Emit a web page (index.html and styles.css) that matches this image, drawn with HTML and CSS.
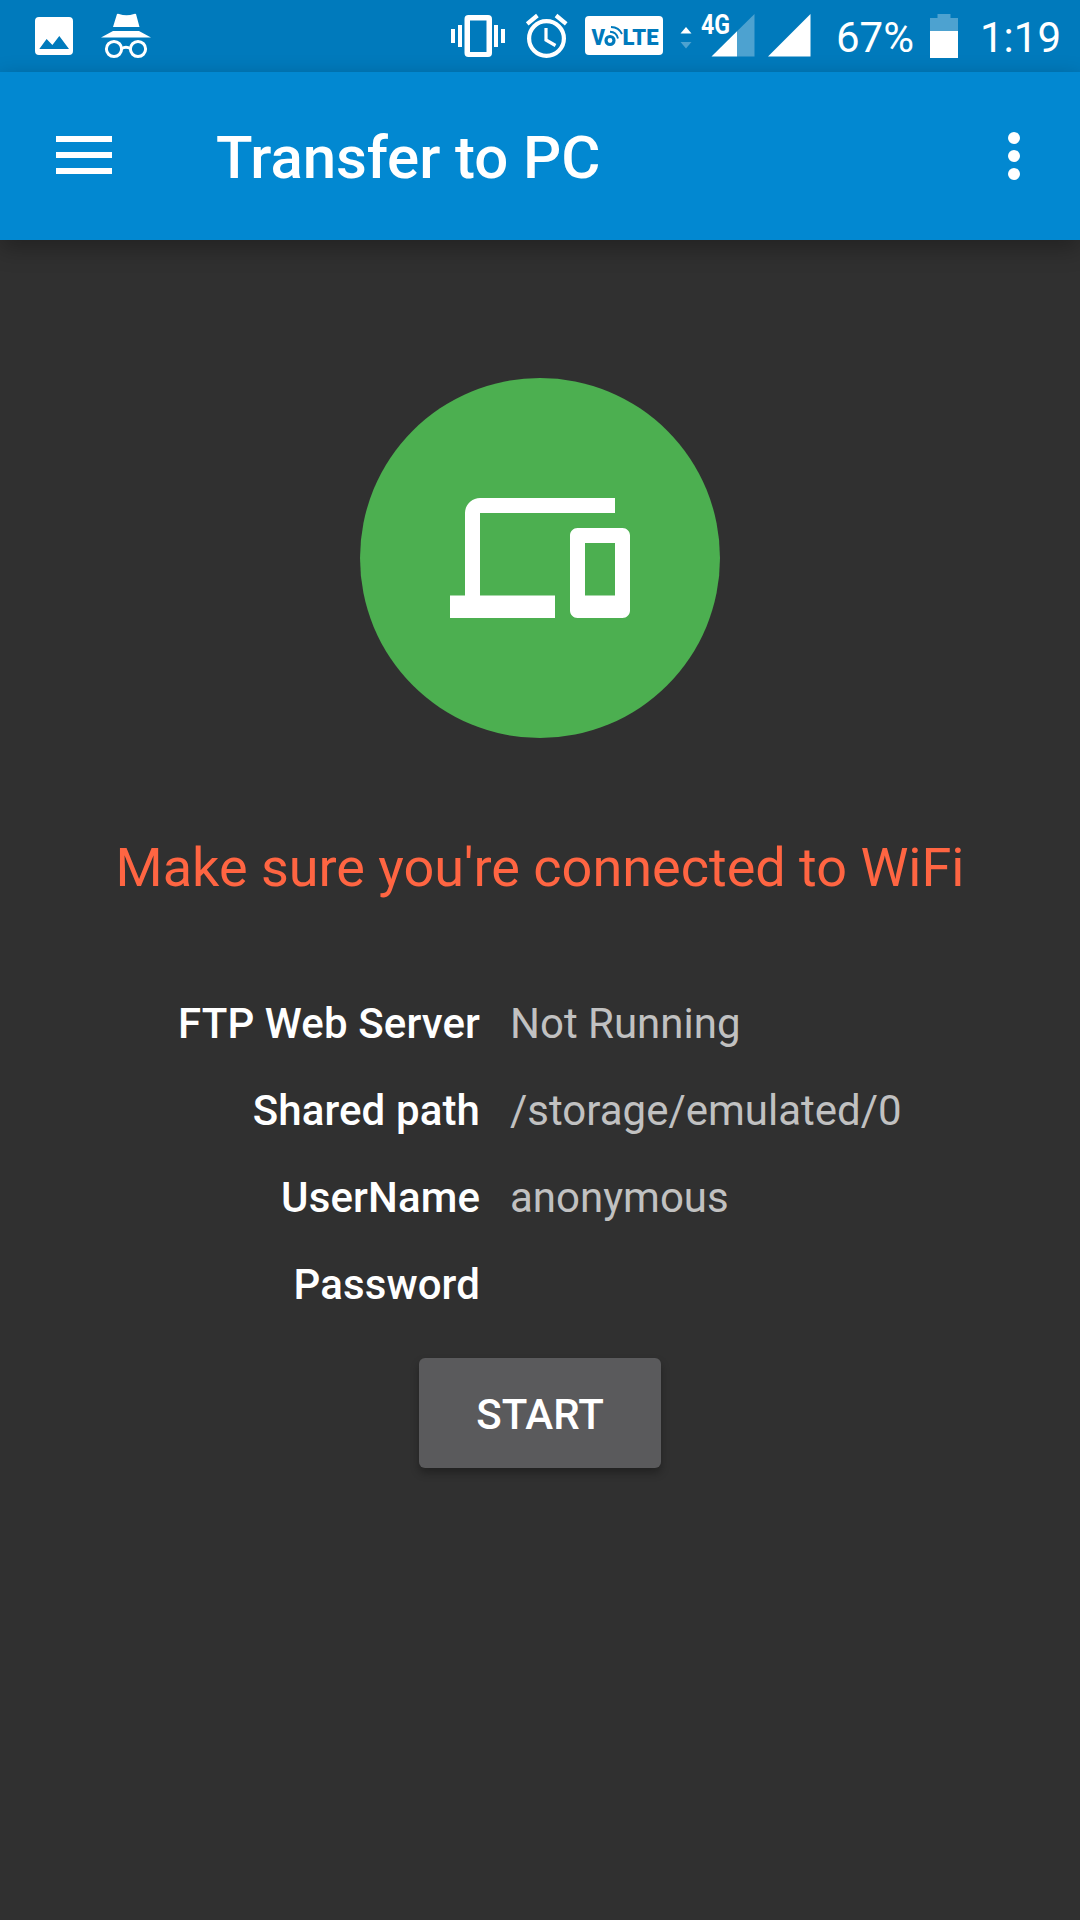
FILE: index.html
```html
<!DOCTYPE html>
<html lang="en">
<head>
<meta charset="utf-8">
<title>Transfer to PC</title>
<link rel="stylesheet" href="styles.css">
</head>
<body>
<div class="status-bar">
  <svg class="icon-image" width="38" height="38" viewBox="0 0 38 38"><path fill="#fff" fill-rule="evenodd" d="M4 0h30a4 4 0 0 1 4 4v30a4 4 0 0 1-4 4H4a4 4 0 0 1-4-4V4a4 4 0 0 1 4-4zM4.300 32h29.700L24.300 19 17.400 28 11.600 22z"/></svg>
  <svg class="icon-incognito" width="50" height="46" viewBox="0 0 50 46"><g fill="#fff"><path d="M12 13 16 0q1-.6 2 0 7.500 2.500 15 0 1-.6 2 0l3.500 13zM12 17h26L50 23.500H0z"/></g><g fill="none" stroke="#fff" stroke-width="3"><circle cx="13" cy="35" r="7.600"/><circle cx="37" cy="35" r="7.600"/><path d="M20.500 34.500q4.500-2.600 9 0"/></g></svg>
  <div class="status-right">
    <svg class="icon-vibrate" width="54" height="42" viewBox="0 0 54 42"><path fill="#fff" fill-rule="evenodd" d="M0 14h4v14H0zM7 10h4v22H7zM43 10h4v22h-4zM50 14h4v14h-4zM17.500 0h19.500a4 4 0 0 1 4 4v34a4 4 0 0 1-4 4H17.500a4 4 0 0 1-4-4V4a4 4 0 0 1 4-4zM19 5.500v31.500h16.500V5.500z"/></svg>
    <svg class="icon-alarm" width="42" height="44" viewBox="0 0 42 44"><g fill="none" stroke="#fff"><circle cx="20.500" cy="24.500" r="17.400" stroke-width="4.200"/><path stroke-width="4.200" d="M1.200 9.800 11.400 1.500M40.200 9.800 30 1.500"/><path stroke-width="3.200" d="M20 14v12l9.500 5.500"/></g></svg>
    <svg class="icon-volte" width="78" height="39" viewBox="0 0 78 39"><rect width="78" height="39" rx="4" fill="#fff"/><text class="volte-text" x="6.500" y="29" textLength="13.500" lengthAdjust="spacingAndGlyphs">V</text><circle cx="25" cy="24.500" r="4" fill="none" stroke="#007abc" stroke-width="3.200"/><path d="M25 15.800q6.500.2 8 6.700M26 11q8 .3 11 7" fill="none" stroke="#007abc" stroke-width="1.900"/><text class="volte-text" x="37.500" y="29" textLength="36" lengthAdjust="spacingAndGlyphs">LTE</text></svg>
    <svg class="icon-arrows" width="12" height="22" viewBox="0 0 12 22"><path fill="#fff" d="M.5 6.500 6 0l5.500 6.500z"/><path fill="#fff" fill-opacity=".3" d="M.5 15h11L6 21.500z"/></svg>
    <svg class="icon-lte" width="54" height="43" viewBox="0 0 54 43"><text class="network-text" x="0" y="20" textLength="29" lengthAdjust="spacingAndGlyphs">4G</text><path fill="#fff" d="M10.500 42.500 36 17.200V42.500z"/><path fill="#fff" fill-opacity=".3" d="M36 17.200 53.500 0v42.500H36z"/></svg>
    <svg class="icon-signal" width="43" height="43" viewBox="0 0 43 43"><path fill="#fff" d="M0 42.500 42.500 0v42.500z"/></svg>
    <span class="battery-level">67%</span>
    <svg class="icon-battery" width="28" height="44" viewBox="0 0 28 44"><path fill="#fff" fill-opacity=".3" d="M7.500 0h13v4H28v13H0V4h7.500z"/><path fill="#fff" d="M0 17h28v27H0z"/></svg>
    <span class="clock">1:19</span>
  </div>
</div>
<header class="app-bar">
  <svg class="menu" width="56" height="38" viewBox="0 0 56 38"><path fill="#fff" d="M0 0h56v6H0zM0 16h56v6H0zM0 32h56v6H0z"/></svg>
  <h1 class="title">Transfer to PC</h1>
  <svg class="overflow" width="12" height="48" viewBox="0 0 12 48"><g fill="#fff"><circle cx="6" cy="6" r="6"/><circle cx="6" cy="24" r="6"/><circle cx="6" cy="42" r="6"/></g></svg>
</header>
<main class="content">
  <div class="badge">
    <svg width="180" height="180" viewBox="0 0 24 24"><path fill="#fff" d="M4 6h18V4H4c-1.100 0-2 .9-2 2v11H0v3h14v-3H4V6zm19 2h-6c-.55 0-1 .45-1 1v10c0 .55.45 1 1 1h6c.55 0 1-.45 1-1V9c0-.55-.45-1-1-1zm-1 9h-4v-7h4v7z"/></svg>
  </div>
  <p class="message">Make sure you're connected to WiFi</p>
  <dl class="details">
    <dt>FTP Web Server</dt><dd>Not Running</dd>
    <dt>Shared path</dt><dd>/storage/emulated/0</dd>
    <dt>UserName</dt><dd>anonymous</dd>
    <dt>Password</dt><dd></dd>
  </dl>
  <button class="start" type="button">START</button>
</main>
</body>
</html>
```

FILE: styles.css
```css
* { box-sizing: border-box; }

body {
  margin: 0;
  min-height: 1920px;
  background: #303030;
  color: #fff;
  font-family: Roboto, sans-serif;
}

svg { display: block; flex: none; overflow: visible; }

.status-bar {
  display: flex;
  align-items: flex-start;
  height: 72px;
  padding-left: 35px;
  background: #007abc;
}

.icon-image { margin-top: 17px; }
.icon-incognito { margin: 14px 0 0 28px; }

.status-right {
  display: flex;
  align-items: flex-start;
  margin-left: 300px;
}

.icon-vibrate { margin-top: 15px; }
.icon-alarm { margin: 14px 0 0 21px; }
.icon-volte { margin: 16px 0 0 17px; }
.icon-arrows { margin: 27px 0 0 17px; }
.icon-lte { margin: 14px 0 0 9px; }
.icon-signal { margin: 14px 0 0 13px; }
.icon-battery { margin-top: 14px; }

.volte-text {
  font: 900 22px Roboto, sans-serif;
  fill: #007abc;
}

.network-text {
  font: 700 28px Roboto, sans-serif;
  fill: #fff;
}

.battery-level,
.clock {
  font-size: 42px;
  line-height: 49px;
  margin-top: 13px;
  white-space: nowrap;
}

.battery-level { width: 94px; margin-left: 25px; }
.clock { margin-left: 22px; }

.app-bar {
  display: flex;
  align-items: center;
  height: 168px;
  padding: 0 60px 0 56px;
  background: #0288d1;
  box-shadow: 0 8px 22px rgba(0, 0, 0, .3);
}

.menu { margin-bottom: 2px; }

.title {
  margin: 0 0 0 104px;
  padding-top: 4px;
  font-size: 60px;
  font-weight: 500;
  line-height: 70px;
  letter-spacing: -.1px;
}

.overflow { margin-left: auto; }

.content {
  display: flex;
  flex-direction: column;
  align-items: center;
  padding-top: 138px;
}

.badge {
  display: grid;
  place-items: center;
  width: 360px;
  height: 360px;
  border-radius: 50%;
  background: #4caf50;
}

.message {
  margin: 98px 0 0;
  font-size: 54px;
  line-height: 64px;
  color: #ff6542;
}

.details {
  display: grid;
  grid-template-columns: 480px 1fr;
  grid-auto-rows: 87px;
  column-gap: 30px;
  width: 100%;
  margin: 80px 0 0;
  font-size: 42px;
  line-height: 87px;
}

.details dt { font-weight: 500; text-align: right; letter-spacing: .12px; }
.details dd { margin: 0; color: #c1c1c1; }

.start {
  width: 242px;
  height: 110px;
  margin-top: 30px;
  padding: 2px 0 0;
  border: 0;
  border-radius: 6px;
  background: #5a5a5c;
  color: #fff;
  font: 500 42px Roboto, sans-serif;
  box-shadow: 0 5px 8px rgba(0, 0, 0, .3);
}
```
